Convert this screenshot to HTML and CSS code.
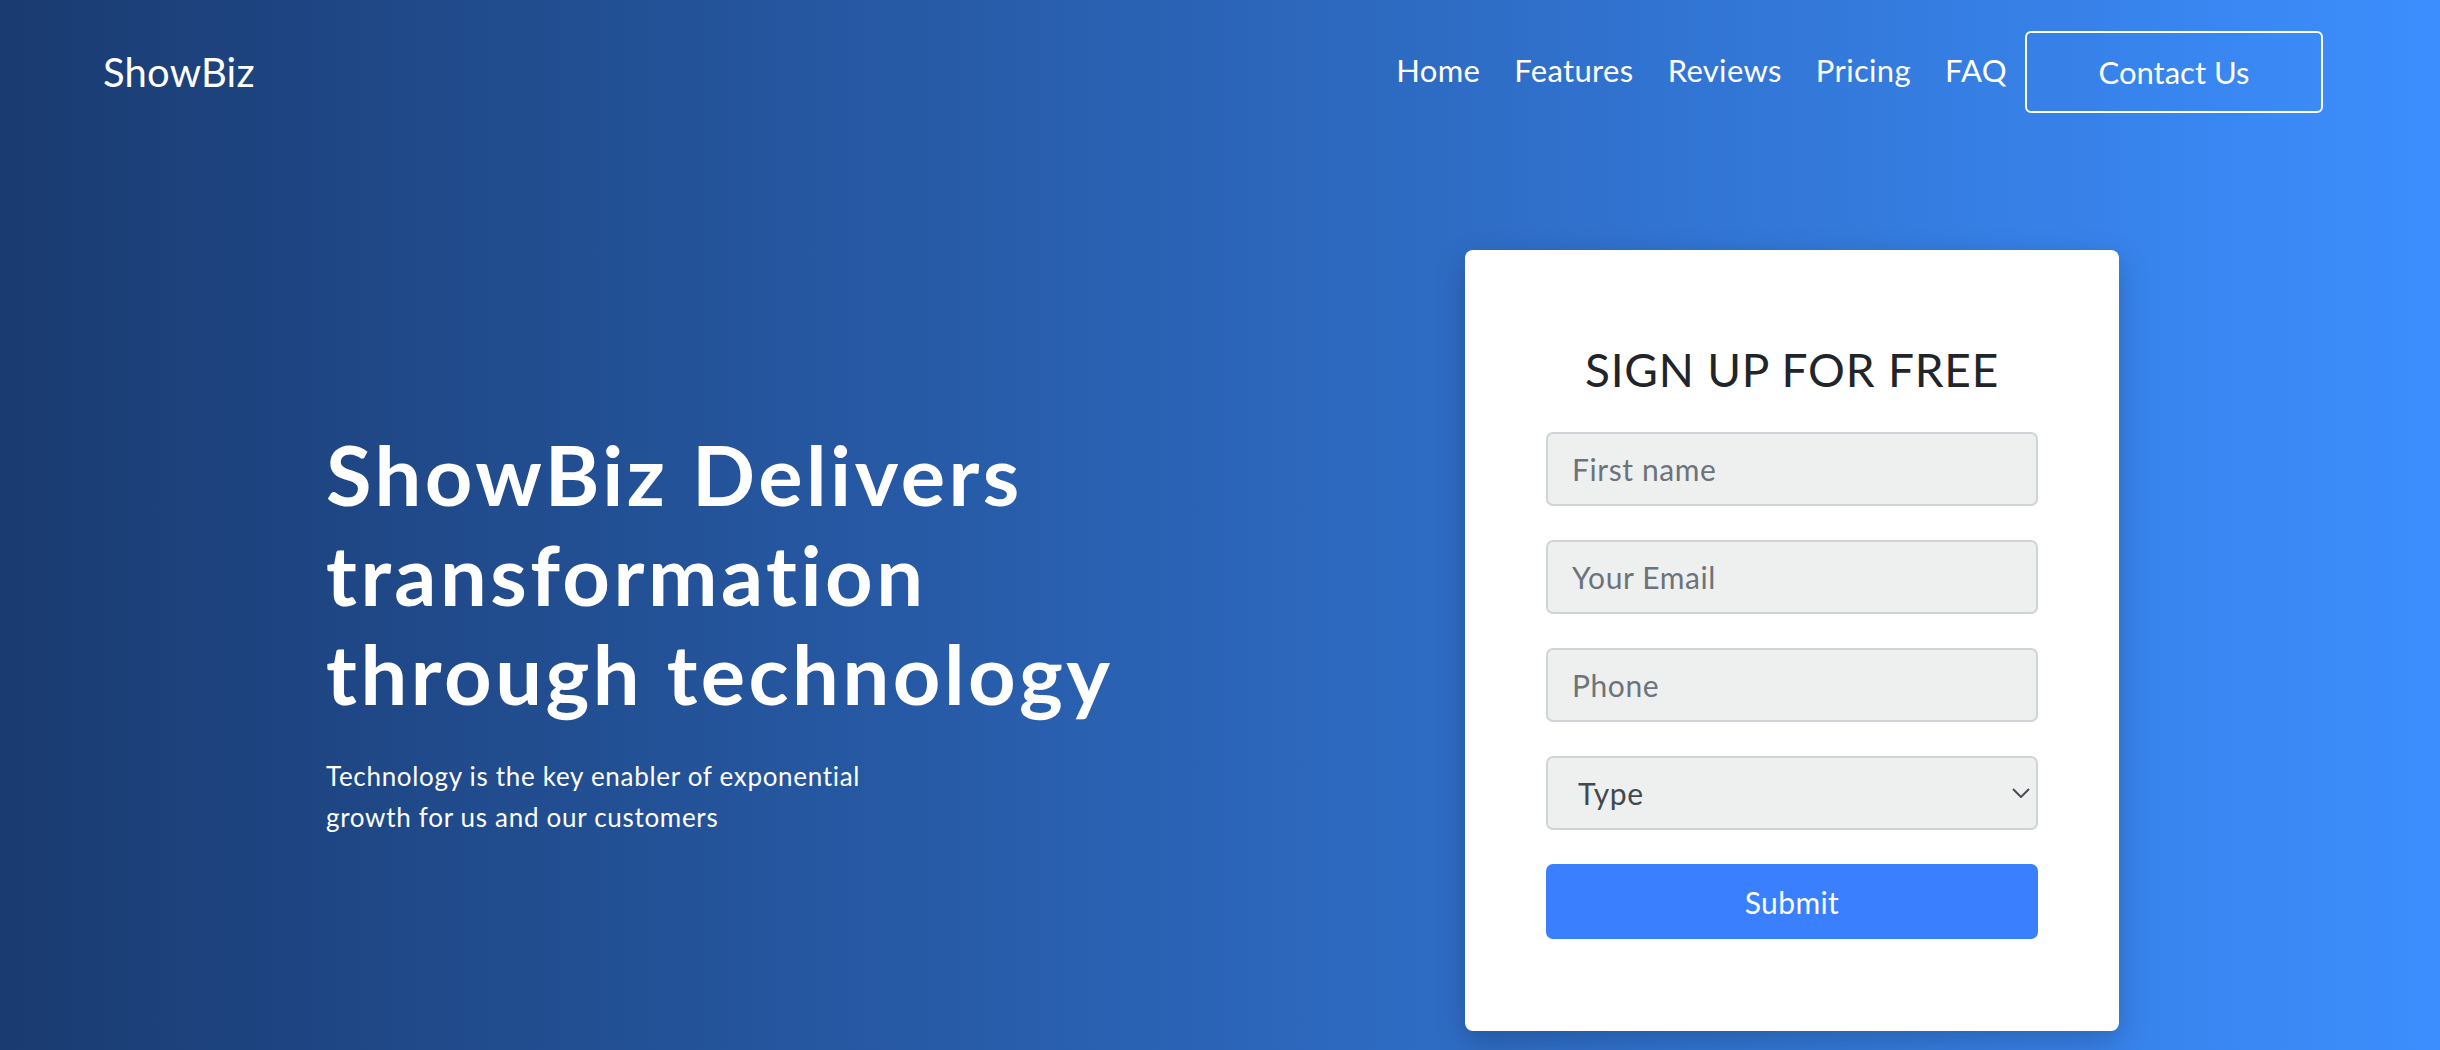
FILE: index.html
```html
<!DOCTYPE html>
<html lang="en">
<head>
<meta charset="utf-8">
<title>ShowBiz</title>
<link rel="stylesheet" href="styles.css">
</head>
<body>
<div class="page">
  <header class="header">
    <a class="logo" href="#">ShowBiz</a>
    <nav class="nav">
      <a class="nav-link" href="#">Home</a>
      <a class="nav-link" href="#">Features</a>
      <a class="nav-link" href="#">Reviews</a>
      <a class="nav-link" href="#">Pricing</a>
      <a class="nav-link" href="#">FAQ</a>
      <a class="contact-btn" href="#">Contact Us</a>
    </nav>
  </header>
  <main class="hero">
    <div class="hero-text">
      <h1 class="hero-title">ShowBiz Delivers transformation through technology</h1>
      <p class="hero-sub">Technology is the key enabler of exponential growth for us and our customers</p>
    </div>
    <div class="card">
      <h2 class="card-title">SIGN UP FOR FREE</h2>
      <form class="form">
        <input class="field" type="text" placeholder="First name">
        <input class="field" type="email" placeholder="Your Email">
        <input class="field" type="tel" placeholder="Phone">
        <div class="select-wrap">
          <select class="field select">
            <option>Type</option>
          </select>
          <svg class="chevron" width="18" height="10" viewBox="0 0 18 10"><path d="M1 1 L9 9 L17 1" fill="none" stroke="#4a4f55" stroke-width="2"/></svg>
        </div>
        <button class="submit" type="button">Submit</button>
      </form>
    </div>
  </main>
</div>
</body>
</html>
```

FILE: styles.css
```css
* { box-sizing: border-box; }
html, body { margin: 0; padding: 0; }
body {
  font-family: Lato, "Open Sans", sans-serif;
  font-variant-ligatures: none;
  color: #fff;
}
.page {
  min-height: 1050px;
  background: linear-gradient(to right, #1a3b71, #3c8efe);
  overflow: hidden;
}
.header {
  display: flex;
  align-items: center;
  justify-content: space-between;
  padding: 31px 117px 31px 103px;
}
.logo {
  color: #fff;
  text-decoration: none;
  font-size: 40px;
  line-height: 1;
  letter-spacing: 0.2px;
}
.nav {
  display: flex;
  align-items: center;
}
.nav-link {
  color: #fff;
  text-decoration: none;
  font-size: 31px;
  padding: 0 17px 5px;
  letter-spacing: 0.35px;
}
.contact-btn {
  color: #fff;
  text-decoration: none;
  font-size: 31px;
  border: 2px solid #fff;
  border-radius: 6px;
  width: 298px;
  height: 82px;
  display: flex;
  align-items: center;
  justify-content: center;
  margin-left: 1px;
}
.hero {
  display: flex;
  align-items: center;
  justify-content: space-between;
  padding: 106px 321px 40px 326px;
}
.hero-text {
  width: 900px;
}
.hero-title {
  font-size: 83px;
  font-weight: 700;
  line-height: 1.2;
  letter-spacing: 3.5px;
  margin: 0 0 32px;
}
.hero-sub {
  font-size: 26px;
  line-height: 1.6;
  letter-spacing: 0.7px;
  max-width: 580px;
  margin: 0 0 17px;
}
.card {
  width: 654px;
  background: #fff;
  border-radius: 8px;
  padding: 92px 81px;
  box-shadow: 0 10px 30px rgba(0, 0, 0, 0.22);
  color: #212529;
}
.card-title {
  font-size: 46px;
  font-weight: 400;
  line-height: 1.2;
  letter-spacing: 0.8px;
  text-align: center;
  margin: 0 0 35px;
  color: #212529;
}
.form {
  display: flex;
  flex-direction: column;
  gap: 34px;
}
.field {
  display: block;
  width: 100%;
  height: 74px;
  background: #eef0ef;
  border: 2px solid #d0d4d9;
  border-radius: 7px;
  padding: 0 24px;
  font-family: Lato, "Open Sans", sans-serif;
  font-size: 30px;
  letter-spacing: 0.6px;
  color: #495057;
  outline: none;
}
.field::placeholder {
  color: #6c737b;
}
.select-wrap {
  position: relative;
}
.select {
  appearance: none;
  -webkit-appearance: none;
  padding-left: 30px;
  color: #43484e;
}
.chevron {
  position: absolute;
  right: 8px;
  top: 32px;
  pointer-events: none;
}
.submit {
  display: block;
  width: 100%;
  height: 75px;
  background: #3a7ffe;
  border: none;
  border-radius: 7px;
  color: #fff;
  font-family: Lato, "Open Sans", sans-serif;
  font-size: 30px;
  letter-spacing: 0.4px;
}
```
